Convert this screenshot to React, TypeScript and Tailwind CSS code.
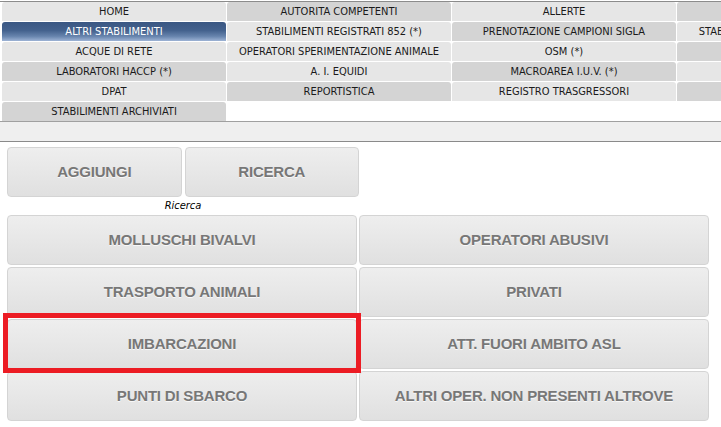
import React from "react";

type Cell = { label: string; tone: "l" | "d" | "sel" | "none" };

const rows: Cell[][] = [
  [
    { label: "HOME", tone: "l" },
    { label: "AUTORITA COMPETENTI", tone: "d" },
    { label: "ALLERTE", tone: "l" },
    { label: "", tone: "d" },
  ],
  [
    { label: "ALTRI STABILIMENTI", tone: "sel" },
    { label: "STABILIMENTI REGISTRATI 852 (*)", tone: "l" },
    { label: "PRENOTAZIONE CAMPIONI SIGLA", tone: "d" },
    { label: "STABILIMENTI RICONOSCIUTI 853 (*)", tone: "l" },
  ],
  [
    { label: "ACQUE DI RETE", tone: "l" },
    { label: "OPERATORI SPERIMENTAZIONE ANIMALE", tone: "l" },
    { label: "OSM (*)", tone: "l" },
    { label: "", tone: "d" },
  ],
  [
    { label: "LABORATORI HACCP (*)", tone: "d" },
    { label: "A. I. EQUIDI", tone: "l" },
    { label: "MACROAREA I.U.V. (*)", tone: "d" },
    { label: "", tone: "l" },
  ],
  [
    { label: "DPAT", tone: "l" },
    { label: "REPORTISTICA", tone: "d" },
    { label: "REGISTRO TRASGRESSORI", tone: "l" },
    { label: "", tone: "d" },
  ],
  [
    { label: "STABILIMENTI ARCHIVIATI", tone: "d" },
    { label: "", tone: "none" },
    { label: "", tone: "none" },
    { label: "", tone: "none" },
  ],
];

function MenuCell({ c }: { c: Cell }) {
  if (c.tone === "none") return <div className="w-[224px] h-[19px] shrink-0" />;
  if (c.tone === "sel")
    return (
      <div className="w-[224px] h-[19px] pt-px shrink-0 rounded-t-[3px] flex items-center justify-center text-white whitespace-nowrap bg-[linear-gradient(to_bottom,#3a5783_0%,#44628e_45%,#6784ad_75%,#9db3d5_100%)]">
        {c.label}
      </div>
    );
  return (
    <div
      className={
        c.tone === "l"
          ? "w-[224px] h-[19px] pt-px shrink-0 rounded-t-[3px] flex items-center justify-center whitespace-nowrap text-[#1a1a1a] bg-[#e6e6e6] overflow-hidden"
          : "w-[224px] h-[19px] pt-px shrink-0 rounded-t-[3px] flex items-center justify-center whitespace-nowrap text-[#1a1a1a] bg-[#d4d4d4] overflow-hidden"
      }
    >
      {c.label}
    </div>
  );
}

function Btn({ label }: { label: string }) {
  return (
    <div className="h-[50px] rounded-[4px] border border-[#d4d4d4] bg-[linear-gradient(to_bottom,#eeeeee,#e0e0e0)] flex items-center justify-center font-bold text-[15px] tracking-[-0.2px] text-[#777777] [text-shadow:0_1px_0_#f8f8f8] whitespace-nowrap">
      {label}
    </div>
  );
}

export default function App() {
  const grid = [
    "MOLLUSCHI BIVALVI",
    "OPERATORI ABUSIVI",
    "TRASPORTO ANIMALI",
    "PRIVATI",
    "IMBARCAZIONI",
    "ATT. FUORI AMBITO ASL",
    "PUNTI DI SBARCO",
    "ALTRI OPER. NON PRESENTI ALTROVE",
  ];
  return (
    <div className="relative w-[721px] h-[427px] overflow-hidden bg-white font-['Liberation_Sans',Arial,sans-serif]">
      <div className="h-px mt-px bg-[#8c8c8c]" />
      <div className="font-['DejaVu_Sans_Condensed','DejaVu_Sans',sans-serif] text-[11px] flex flex-col gap-px pl-[2px]">
        {rows.map((r, i) => (
          <div key={i} className="flex gap-px">
            {r.map((c, j) => (
              <MenuCell key={j} c={c} />
            ))}
          </div>
        ))}
      </div>
      <div className="h-px bg-[#a0a0a0]" />
      <div className="h-[19px] bg-[#efefef]" />
      <div className="h-px bg-[#8a8a8a]" />
      <div className="pl-[7px] pt-[5px]">
        <div className="w-[352px] flex gap-[3px]">
          <div className="flex-1">
            <Btn label="AGGIUNGI" />
          </div>
          <div className="flex-1">
            <Btn label="RICERCA" />
          </div>
        </div>
        <div className="w-[352px] h-[18px] flex items-center justify-center italic text-[11px] text-black font-['DejaVu_Sans_Condensed','DejaVu_Sans',sans-serif]">
          Ricerca
        </div>
        <div className="w-[702px] grid grid-cols-2 gap-[2px]">
          {grid.map((g) => (
            <Btn key={g} label={g} />
          ))}
        </div>
      </div>
      <div className="absolute left-[3px] top-[313px] w-[358px] h-[60px] border-[5px] border-[#ec1c24]" />
    </div>
  );
}
